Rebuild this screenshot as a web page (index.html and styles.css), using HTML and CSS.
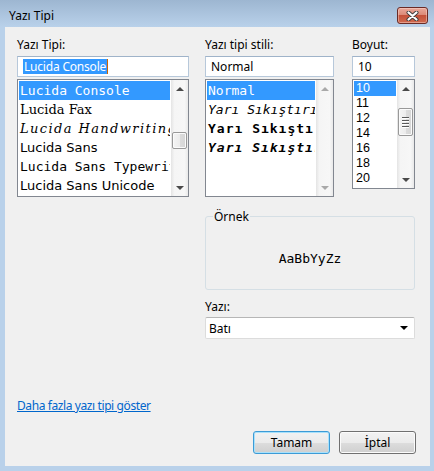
FILE: index.html
```html
<!DOCTYPE html>
<html lang="tr">
<head>
<meta charset="utf-8">
<title>Yazı Tipi</title>
<link rel="stylesheet" href="styles.css">
</head>
<body>
<div class="window">
  <div class="titlebar">
    <span class="title">Yazı Tipi</span>
    <button class="close" aria-label="Kapat">
      <svg width="13" height="10" viewBox="0 0 13 10">
        <path d="M2.5 1.5 L10.5 8.5 M10.5 1.5 L2.5 8.5" stroke="#3b3b3b" stroke-width="4" stroke-linecap="round"/>
        <path d="M2.5 1.5 L10.5 8.5 M10.5 1.5 L2.5 8.5" stroke="#ffffff" stroke-width="2.2" stroke-linecap="round"/>
      </svg>
    </button>
  </div>
  <div class="client">
    <div class="top">
      <div class="col c1">
        <div class="lbl">Yazı Tipi:</div>
        <div class="input"><span class="sel">Lucida Console</span><span class="caret"></span></div>
        <div class="list tall">
          <div class="items">
            <div class="item hl f-mono">Lucida Console</div>
            <div class="item f-fax">Lucida Fax</div>
            <div class="item f-hand">Lucida Handwriting</div>
            <div class="item f-sans">Lucida Sans</div>
            <div class="item f-mono">Lucida Sans Typewriter</div>
            <div class="item f-sans">Lucida Sans Unicode</div>
          </div>
          <div class="sb">
            <div class="arr up"></div>
            <div class="track"><div class="thumb thumb-fonts"></div></div>
            <div class="arr down"></div>
          </div>
        </div>
      </div>
      <div class="col c2">
        <div class="lbl">Yazı tipi stili:</div>
        <div class="input"><span>Normal</span></div>
        <div class="list tall">
          <div class="items">
            <div class="item hl f-mono">Normal</div>
            <div class="item f-mono it">Yarı Sıkıştırılmış</div>
            <div class="item f-mono bd">Yarı Sıkıştırılmış Kalın</div>
            <div class="item f-mono bd it">Yarı Sıkıştırılmış Kalın İtalik</div>
          </div>
          <div class="sb disabled">
            <div class="arr up"></div>
            <div class="track"></div>
            <div class="arr down"></div>
          </div>
        </div>
      </div>
      <div class="col c3">
        <div class="lbl">Boyut:</div>
        <div class="input"><span>10</span></div>
        <div class="list short">
          <div class="items sizes">
            <div class="item hl">10</div>
            <div class="item">11</div>
            <div class="item">12</div>
            <div class="item">14</div>
            <div class="item">16</div>
            <div class="item">18</div>
            <div class="item">20</div>
          </div>
          <div class="sb">
            <div class="arr up"></div>
            <div class="track"><div class="thumb thumb-sizes"><i></i><i></i><i></i><i></i></div></div>
            <div class="arr down"></div>
          </div>
        </div>
      </div>
    </div>

    <div class="middle">
      <div class="group">
        <span class="legend">Örnek</span>
        <div class="sample">AaBbYyZz</div>
      </div>
      <div class="lbl script-lbl">Yazı:</div>
      <div class="combo"><span>Batı</span><span class="drop"></span></div>
    </div>

    <a class="link" href="#">Daha fazla yazı tipi göster</a>

    <div class="buttons">
      <button class="btn default">Tamam</button>
      <button class="btn">İptal</button>
    </div>
  </div>
</div>
</body>
</html>
```
FILE: styles.css
```css
* { box-sizing: border-box; }
html, body { margin: 0; padding: 0; }
body {
  width: 434px;
  height: 471px;
  overflow: hidden;
  font-family: "Noto Sans", "Open Sans", sans-serif;
  font-size: 12px;
  color: #000;
}
.window {
  width: 434px;
  height: 471px;
  display: flex;
  flex-direction: column;
  background: linear-gradient(to bottom, #9db6d1 0px, #b9d1ea 27px, #b9d1ea 100%);
}
.titlebar {
  height: 27px;
  flex: none;
  display: flex;
  justify-content: space-between;
  align-items: flex-start;
  padding-left: 9px;
}
.title {
  margin-top: 8px;
  line-height: 15px;
  font-size: 12px;
  color: #000;
}
.close {
  margin-top: 7px;
  margin-right: 6px;
  width: 31px;
  height: 17px;
  padding: 0;
  border: 1px solid #6a2b26;
  border-radius: 3px;
  background: linear-gradient(to bottom, #e9a99b 0%, #dc8a78 45%, #c4513a 50%, #cf6a4f 100%);
  box-shadow: inset 0 0 0 1px rgba(255, 220, 210, 0.45);
  display: flex;
  align-items: center;
  justify-content: center;
}
.close svg { display: block; }

.client {
  flex: 1;
  margin: 0 4px 5px 5px;
  background: #f0f0f0;
  padding: 11px 14px 0 12px;
  display: flex;
  flex-direction: column;
}

.top { display: flex; align-items: flex-start; }
.col { display: flex; flex-direction: column; }
.c1 { width: 172px; }
.c2 { width: 129px; margin-left: 16px; }
.c3 { width: 63px; margin-left: 18px; }

.lbl {
  line-height: 14px;
  height: 14px;
  margin-bottom: 4px;
  white-space: nowrap;
}

.input {
  height: 21px;
  background: #fff;
  border: 1px solid #b7c8da;
  border-top-color: #9fb3c9;
  padding: 0 0 0 5px;
  display: flex;
  align-items: center;
  white-space: nowrap;
  overflow: hidden;
  line-height: 15px;
}
.input .sel {
  background: #3399ff;
  color: #fff;
  padding: 0 1px;
  letter-spacing: -0.2px;
}
.caret {
  display: inline-block;
  width: 1px;
  height: 15px;
  background: #cc6600;
}

.list {
  margin-top: 2px;
  border: 1px solid #828790;
  background: #fff;
  display: flex;
}
.list.tall { height: 118px; }
.list.short { height: 110px; }
.items {
  flex: 1;
  min-width: 0;
  padding: 1px;
  overflow: hidden;
}
.item {
  height: 19px;
  line-height: 19px;
  white-space: nowrap;
  overflow: hidden;
  padding-left: 1px;
  color: #000;
}
.item.hl { background: #3399ff; color: #fff; }
.f-mono { font-family: "DejaVu Sans Mono", "Liberation Mono", monospace; font-size: 13px; }
.f-fax { font-family: "DejaVu Serif", "Liberation Serif", serif; font-size: 13px; }
.f-hand { font-family: "DejaVu Serif", "Liberation Serif", serif; font-style: italic; font-size: 13px; letter-spacing: 1.4px; }
.f-sans { font-family: "DejaVu Sans", "Liberation Sans", sans-serif; font-size: 13px; }
.it { font-style: italic; }
.bd { font-weight: bold; letter-spacing: 1px; }

.sizes .item {
  height: 15px;
  line-height: 15px;
  font-family: "Liberation Sans", "DejaVu Sans", sans-serif;
  font-size: 12.5px;
  padding-left: 2px;
}

.sb {
  width: 17px;
  flex: none;
  display: flex;
  flex-direction: column;
  background: linear-gradient(to right, #e4e4e4 0%, #f5f5f5 20%, #f7f7f7 80%, #e9e9e9 100%);
}
.arr {
  height: 17px;
  flex: none;
  display: flex;
  align-items: center;
  justify-content: center;
}
.arr::before {
  content: "";
  width: 0;
  height: 0;
  border-left: 4px solid transparent;
  border-right: 4px solid transparent;
}
.arr.up::before { border-bottom: 4px solid #4a4a4a; }
.arr.down::before { border-top: 4px solid #4a4a4a; }
.sb.disabled .arr.up::before { border-bottom-color: #a9a9a9; }
.sb.disabled .arr.down::before { border-top-color: #a9a9a9; }
.track { flex: 1; display: flex; flex-direction: column; }
.thumb {
  margin: 0 1px 0 1px;
  border: 1px solid #999;
  border-radius: 2px;
  background: linear-gradient(to right, #f4f4f4 0%, #ececec 50%, #dcdcdc 51%, #d6d6d6 100%);
  box-shadow: inset 0 0 0 1px #fbfbfb;
  display: flex;
  flex-direction: column;
  align-items: center;
  justify-content: center;
  gap: 1px;
}
.thumb-fonts { margin-top: 35px; height: 17px; }
.thumb-sizes { margin-top: 11px; height: 28px; }
.thumb i {
  display: block;
  width: 7px;
  height: 1px;
  background: #5a5a5a;
  border-bottom: 1px solid #fff;
  box-sizing: content-box;
}

.middle {
  margin-left: 188px;
  width: 210px;
  display: flex;
  flex-direction: column;
}
.group {
  position: relative;
  margin-top: 19px;
  height: 74px;
  border: 1px solid #d5dfe5;
  border-radius: 3px;
  display: flex;
  align-items: center;
  justify-content: center;
  padding-top: 11px;
}
.legend {
  position: absolute;
  top: -8px;
  left: 7px;
  padding: 0 1px;
  line-height: 15px;
  background: #f0f0f0;
}
.sample {
  font-family: "DejaVu Sans Mono", "Liberation Mono", monospace;
  font-size: 13px;
  line-height: 15px;
}
.script-lbl { margin-top: 10px; margin-bottom: 3px; }
.combo {
  height: 22px;
  background: #fff;
  border: 1px solid #dcdcdc;
  border-top-color: #b6b6b6;
  border-radius: 2px;
  display: flex;
  align-items: center;
  justify-content: space-between;
  padding: 0 6px 0 3px;
  line-height: 15px;
}
.drop {
  width: 0;
  height: 0;
  border-left: 4px solid transparent;
  border-right: 4px solid transparent;
  border-top: 4px solid #000;
}

.link {
  align-self: flex-start;
  margin-top: 60px;
  line-height: 14px;
  color: #0066cc;
  text-decoration: underline;
  letter-spacing: -0.4px;
}

.buttons {
  margin-top: 18px;
  display: flex;
  justify-content: flex-end;
  gap: 9px;
}
.btn {
  width: 77px;
  height: 23px;
  padding: 0;
  border: 1px solid #707070;
  border-radius: 3px;
  background: linear-gradient(to bottom, #f2f2f2 0%, #ebebeb 50%, #dddddd 51%, #cfcfcf 100%);
  box-shadow: inset 0 0 0 1px #fbfbfb;
  font-family: "Noto Sans", "Open Sans", sans-serif;
  font-size: 12px;
  color: #000;
  line-height: 15px;
}
.btn.default {
  border-color: #3c9bd6;
  box-shadow: inset 0 0 0 1px #a9e1fb;
}
```
